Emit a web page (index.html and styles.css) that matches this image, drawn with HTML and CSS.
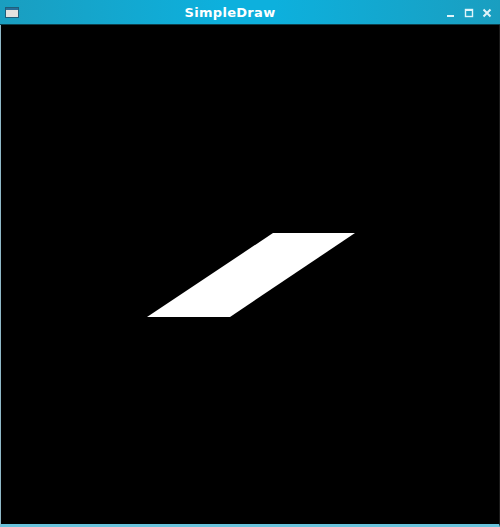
FILE: index.html
```html
<!DOCTYPE html>
<html>
<head>
<meta charset="utf-8">
<link rel="stylesheet" href="styles.css">
</head>
<body>
<div class="window">
  <div class="titlebar">
    <div class="app-icon"><div class="app-icon-top"></div></div>
    <div class="title">SimpleDraw</div>
    <div class="controls">
      <svg class="ctl" width="10" height="10" viewBox="0 0 10 10"><rect x="1" y="7" width="7" height="2" fill="#dff4fa"/></svg>
      <svg class="ctl" width="10" height="10" viewBox="0 0 10 10"><rect x="1.5" y="1.5" width="7" height="7" fill="none" stroke="#dff4fa" stroke-width="1.4"/><rect x="1" y="1" width="8" height="2" fill="#dff4fa"/></svg>
      <svg class="ctl" width="10" height="10" viewBox="0 0 10 10"><path d="M1.5 1.5 L8.5 8.5 M8.5 1.5 L1.5 8.5" stroke="#dff4fa" stroke-width="2"/></svg>
    </div>
  </div>
  <div class="canvas">
    <svg class="drawing" width="498" height="499" viewBox="0 0 498 499">
      <polygon points="272,208 354,208 229,292 146,292" fill="#ffffff"/>
    </svg>
  </div>
</div>
</body>
</html>
```
FILE: styles.css
```css
html, body {
  margin: 0;
  padding: 0;
  background: #000;
}
.window {
  width: 500px;
  height: 527px;
  display: flex;
  flex-direction: column;
  background: #000;
  box-sizing: border-box;
  border-left: 1px solid #8fb9c8;
  border-right: 1px solid #1a1a1a;
  border-bottom: 3px solid #69c3dc;
}
.titlebar {
  height: 24px;
  flex: 0 0 24px;
  display: flex;
  align-items: center;
  position: relative;
  background: linear-gradient(to right, #1a9ec0 0%, #0db0dd 45%, #0db0dd 55%, #1a9ec0 100%);
  border-bottom: 1px solid #0d3f4c;
  margin-left: -1px;
  margin-right: -1px;
}
.app-icon {
  width: 12px;
  height: 9px;
  margin-left: 5px;
  margin-top: 1px;
  background: #e4e2df;
  border: 1px solid #1f5f7a;
  box-sizing: content-box;
}
.app-icon-top {
  height: 2px;
  background: #2a6e98;
}
.title {
  position: absolute;
  left: 0;
  right: 0;
  text-align: center;
  font-family: "DejaVu Sans", sans-serif;
  font-weight: bold;
  font-size: 13px;
  color: #ffffff;
  letter-spacing: 0.3px;
  padding-right: 40px;
}
.controls {
  margin-left: auto;
  display: flex;
  gap: 8px;
  margin-right: 8px;
  margin-top: 2px;
}
.ctl {
  display: block;
}
.canvas {
  flex: 1;
  background: #000;
}
.drawing {
  display: block;
}
```
